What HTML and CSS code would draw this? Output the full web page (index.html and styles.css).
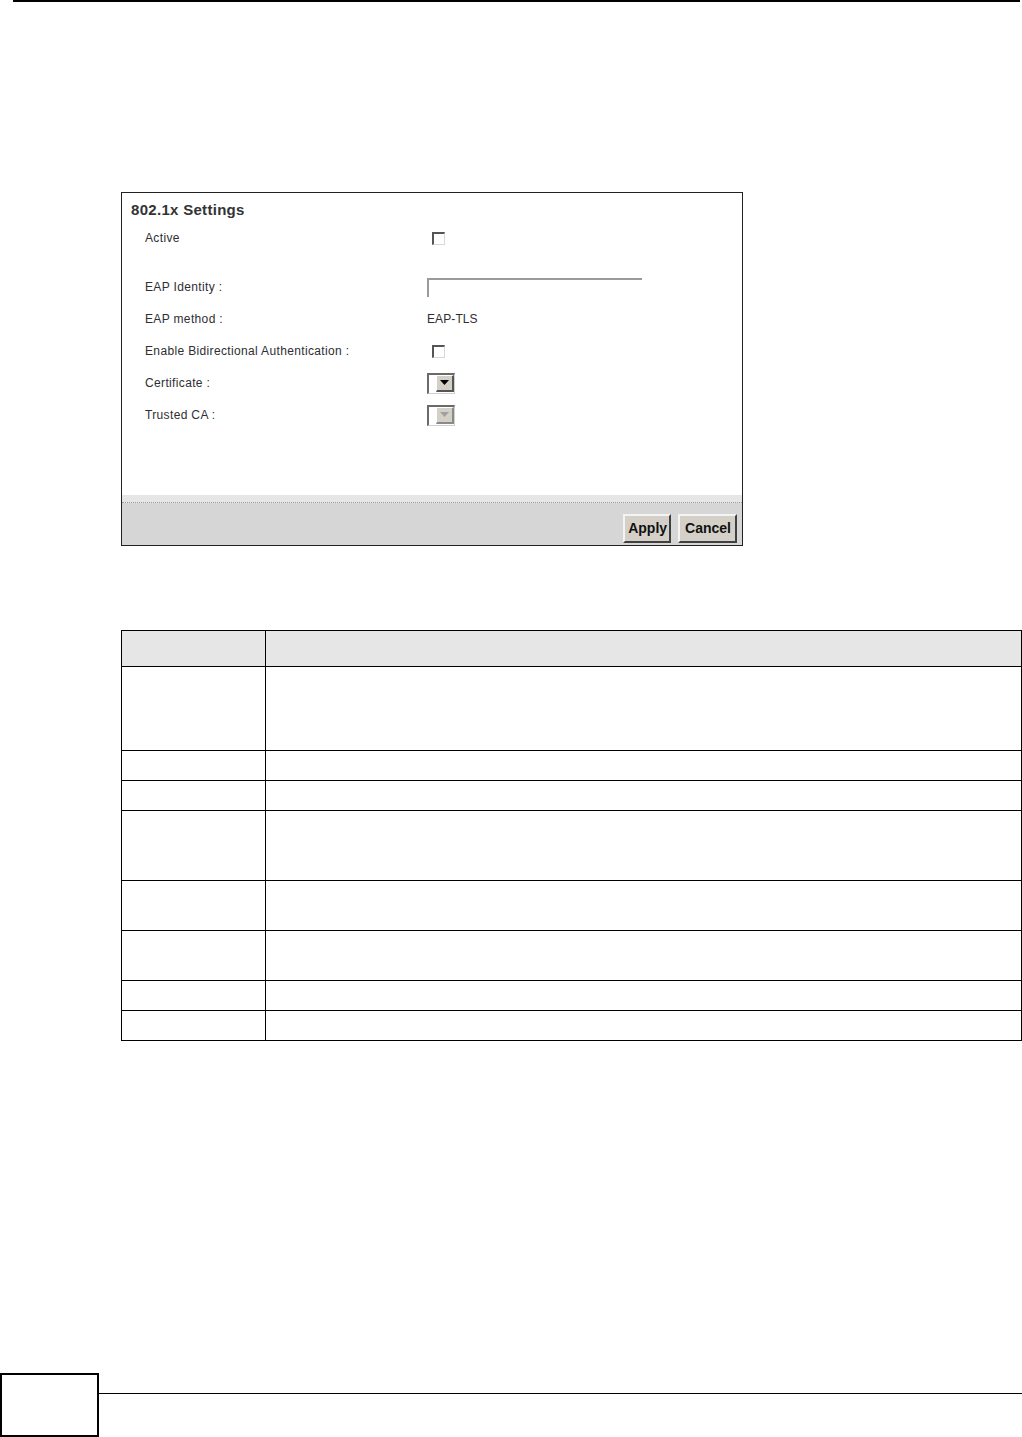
FILE: index.html
```html
<!DOCTYPE html>
<html>
<head>
<meta charset="utf-8">
<link rel="stylesheet" href="styles.css">
</head>
<body>
<div class="top-rule"></div>

<div class="panel">
  <div class="panel-body">
    <div class="panel-title">802.1x Settings</div>
    <div class="form-row">
      <span class="label">Active</span>
      <span class="control"><span class="checkbox"></span></span>
    </div>
    <div class="spacer"></div>
    <div class="form-row">
      <span class="label">EAP Identity :</span>
      <span class="control"><span class="textbox"></span></span>
    </div>
    <div class="form-row">
      <span class="label">EAP method :</span>
      <span class="control value">EAP-TLS</span>
    </div>
    <div class="form-row">
      <span class="label">Enable Bidirectional Authentication :</span>
      <span class="control"><span class="checkbox"></span></span>
    </div>
    <div class="form-row">
      <span class="label">Certificate :</span>
      <span class="control">
        <span class="select"><span class="select-btn"><svg width="9" height="5" viewBox="0 0 9 5"><path d="M0 0h9L4.5 5z" fill="#000"/></svg></span></span>
      </span>
    </div>
    <div class="form-row">
      <span class="label">Trusted CA :</span>
      <span class="control">
        <span class="select disabled"><span class="select-btn"><svg width="9" height="5" viewBox="0 0 9 5"><path d="M0 0h9L4.5 5z" fill="#a0a0a0"/></svg></span></span>
      </span>
    </div>
  </div>
  <div class="panel-footer">
    <div class="footer-light"></div>
    <div class="footer-main">
      <span class="btn btn-apply">Apply</span>
      <span class="btn btn-cancel">Cancel</span>
    </div>
  </div>
</div>

<table class="desc-table">
  <tr class="head"><th class="c1"></th><th></th></tr>
  <tr class="h84"><td class="c1"></td><td></td></tr>
  <tr class="h30"><td class="c1"></td><td></td></tr>
  <tr class="h30"><td class="c1"></td><td></td></tr>
  <tr class="h70"><td class="c1"></td><td></td></tr>
  <tr class="h50"><td class="c1"></td><td></td></tr>
  <tr class="h50"><td class="c1"></td><td></td></tr>
  <tr class="h30"><td class="c1"></td><td></td></tr>
  <tr class="h30"><td class="c1"></td><td></td></tr>
</table>

<div class="page-footer">
  <div class="page-box"></div>
  <div class="page-line"></div>
</div>
</body>
</html>
```

FILE: styles.css
```css
html, body {
  margin: 0;
  padding: 0;
  background: #fff;
}
body {
  font-family: "Liberation Sans", Arial, sans-serif;
  width: 1022px;
}

.top-rule {
  margin: 0 2px 0 13px;
  height: 0;
  border-top: 2px solid #000;
}

/* settings panel */
.panel {
  margin: 190px 0 0 121px;
  width: 620px;
  height: 352px;
  border: 1px solid #222;
  display: flex;
  flex-direction: column;
}
.panel-body {
  flex: 1;
  display: flex;
  flex-direction: column;
}
.panel-title {
  padding: 8px 0 3px 9px;
  font-size: 15px;
  line-height: 18px;
  font-weight: bold;
  letter-spacing: 0.3px;
  color: #333;
}
.form-row {
  height: 32px;
  display: grid;
  grid-template-columns: 282px 1fr;
  align-items: center;
  padding-left: 23px;
  font-size: 12px;
  color: #2e2e33;
}
.label {
  letter-spacing: 0.35px;
  white-space: nowrap;
}
.spacer {
  height: 17px;
}
.control {
  display: flex;
  align-items: center;
}
.value {
  letter-spacing: 0.1px;
}
.checkbox {
  display: block;
  width: 10px;
  height: 10px;
  margin-left: 5px;
  border-top: 2px solid #555;
  border-left: 2px solid #555;
  border-right: 1px solid #d8d8d8;
  border-bottom: 1px solid #d8d8d8;
  background: #fff;
}
.textbox {
  display: block;
  width: 213px;
  height: 17px;
  border-top: 2px solid #9a9a9a;
  border-left: 2px solid #9a9a9a;
  background: #fff;
}
.select {
  display: flex;
  justify-content: flex-end;
  width: 25px;
  height: 18px;
  border-top: 2px solid #6a6a6a;
  border-left: 2px solid #6a6a6a;
  border-right: 1px solid #d0d0d0;
  border-bottom: 1px solid #d0d0d0;
  background: #fff;
}
.select-btn {
  width: 15px;
  height: 14px;
  display: flex;
  align-items: center;
  justify-content: center;
  background: #d4d0c8;
  border-top: 1px solid #fff;
  border-left: 1px solid #fff;
  border-right: 2px solid #555;
  border-bottom: 2px solid #555;
}
.select.disabled .select-btn {
  border-right-color: #8a8a8a;
  border-bottom-color: #8a8a8a;
}

.panel-footer {
  height: 50px;
  display: flex;
  flex-direction: column;
}
.footer-light {
  height: 7px;
  background: #e6e6e6;
  border-bottom: 1px dotted #9c9c9c;
}
.footer-main {
  flex: 1;
  background: #d6d6d6;
  display: flex;
  justify-content: flex-end;
  align-items: flex-end;
  gap: 7px;
  padding: 0 5px 2px 0;
}
.btn {
  display: block;
  height: 25px;
  line-height: 25px;
  font-size: 14px;
  font-weight: bold;
  color: #111;
  background: #d4d0c8;
  border-top: 2px solid #f4f4f4;
  border-left: 2px solid #f4f4f4;
  border-right: 2px solid #404040;
  border-bottom: 2px solid #404040;
}
.btn-apply {
  padding: 0 2px 0 3px;
}
.btn-cancel {
  padding: 0 4px 0 5px;
}

/* description table */
.desc-table {
  margin: 84px 0 0 121px;
  width: 901px;
  border-collapse: collapse;
}
.desc-table th,
.desc-table td {
  border: 1px solid #000;
  padding: 0;
}
.desc-table .c1 {
  width: 143px;
}
.desc-table .head th {
  height: 35px;
  background: #e6e6e6;
}
.h84 td { height: 83px; }
.h30 td { height: 29px; }
.h70 td { height: 69px; }
.h50 td { height: 49px; }

/* page footer */
.page-footer {
  margin-top: 332px;
  display: flex;
  align-items: flex-start;
}
.page-box {
  width: 95px;
  height: 60px;
  border: 2px solid #000;
}
.page-line {
  flex: 1;
  margin-top: 20px;
  border-top: 1px solid #000;
}
```
